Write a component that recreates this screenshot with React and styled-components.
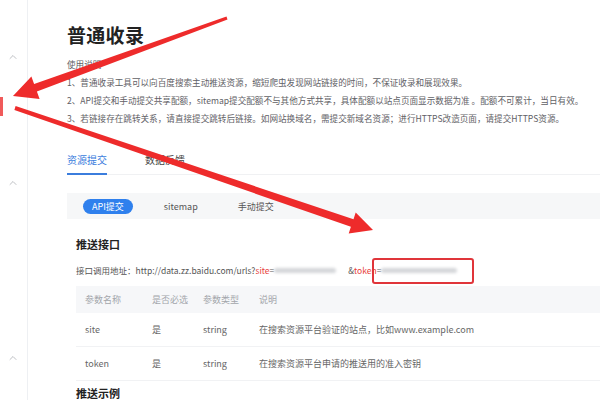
import styled, { createGlobalStyle } from 'styled-components'
import { ChevronUp } from 'lucide-react'

const GlobalStyle = createGlobalStyle`
	html, body {
		margin: 0;
		padding: 0;
		background: #fff;
	}
	body {
		font-family: "Noto Sans CJK SC", "Liberation Sans", sans-serif;
		color: #555;
	}
`

const Page = styled.div`
	position: relative;
	display: flex;
	width: 600px;
	height: 400px;
	overflow: hidden;
	background: #fff;
`

const Sidebar = styled.aside`
	flex: 0 0 27px;
	border-right: 1px solid #eef0f3;
	display: flex;
	flex-direction: column;
	align-items: center;
`

const Chevron = styled.div`
	margin-top: ${p => p.$gap}px;
	height: 12px;
	display: flex;
	color: #a8abb0;
	margin-left: -2px;
`

const Marker = styled.div`
	align-self: flex-start;
	margin-top: ${p => p.$gap}px;
	width: 3px;
	height: 19px;
	background: #f05a5a;
`

const Main = styled.main`
	flex: 1;
	padding: 23px 0 0 39px;
	min-width: 0;
`

const Title = styled.h1`
	margin: 0;
	font-size: 19px;
	line-height: 24px;
	font-weight: 700;
	color: #222;
	letter-spacing: 0.3px;
`

const Notes = styled.div`
	margin-top: 8px;
	font-size: 8.6px;
	line-height: 18px;
	color: #5f6166;
	white-space: nowrap;
`

const Tabs = styled.div`
	margin-top: 26px;
	display: flex;
	gap: 38px;
	border-bottom: 1px solid #f0f1f3;
	width: 700px;
`

const Tab = styled.div`
	font-size: 10px;
	line-height: 14px;
	padding-bottom: 6px;
	color: ${p => (p.$active ? '#3b7ddd' : '#444')};
	border-bottom: 2px solid ${p => (p.$active ? '#3b7ddd' : 'transparent')};
	margin-bottom: -1px;
`

const SubBar = styled.div`
	margin-top: 18px;
	height: 26px;
	width: 700px;
	background: #f6f7f8;
	display: flex;
	align-items: center;
	gap: 22px;
	padding-left: 16px;
	box-sizing: border-box;
`

const SubTab = styled.div`
	font-size: 9px;
	line-height: 15px;
	padding: 0 9px;
	border-radius: 8px;
	color: ${p => (p.$active ? '#fff' : '#555')};
	background: ${p => (p.$active ? '#2f80ed' : 'transparent')};
`

const Section = styled.section`
	padding-left: 9px;
`

const Heading = styled.h2`
	margin: ${p => p.$gap}px 0 0;
	font-size: 11px;
	line-height: 16px;
	font-weight: 700;
	color: #222;
`

const UrlLine = styled.div`
	position: relative;
	margin-top: 10px;
	font-size: 8.5px;
	line-height: 16px;
	color: #555;
	white-space: nowrap;
	display: flex;
	align-items: center;
`

const Red = styled.span`
	color: #e8413c;
`

const Blur = styled.span`
	display: inline-block;
	width: ${p => p.$w}px;
	height: 5px;
	margin-right: ${p => p.$mr || 0}px;
	background: #d4d6d9;
	filter: blur(1.6px);
	border-radius: 3px;
`

const Highlight = styled.div`
	position: absolute;
	left: 296px;
	top: -4px;
	width: 98px;
	height: 22px;
	border: 2px solid #e0353a;
	border-radius: 3px;
`

const Table = styled.div`
	margin-top: 8px;
	width: 700px;
	font-size: 9px;
`

const Row = styled.div`
	display: grid;
	grid-template-columns: 67px 51px 56px 1fr;
	padding-left: 9px;
	align-items: center;
	height: ${p => (p.$head ? 27 : 34)}px;
	background: ${p => (p.$head ? '#f6f7f9' : '#fff')};
	color: ${p => (p.$head ? '#a3a6ab' : '#666')};
	border-bottom: ${p => (p.$head ? 'none' : '1px solid #f1f2f4')};
	box-sizing: border-box;
`

const Overlay = styled.svg`
	position: absolute;
	left: 0;
	top: 0;
	pointer-events: none;
`

const params = [
	['site', '是', 'string', '在搜索资源平台验证的站点，比如www.example.com'],
	['token', '是', 'string', '在搜索资源平台申请的推送用的准入密钥'],
]

const App = () => (
	<Page>
		<GlobalStyle />
		<Sidebar>
			<Chevron $gap={51}><ChevronUp size={12} strokeWidth={1.5} /></Chevron>
			<Marker $gap={34} />
			<Chevron $gap={61}><ChevronUp size={12} strokeWidth={1.5} /></Chevron>
			<Chevron $gap={163}><ChevronUp size={12} strokeWidth={1.5} /></Chevron>
		</Sidebar>
		<Main>
			<Title>普通收录</Title>
			<Notes>
				<div>使用说明</div>
				<div>1、普通收录工具可以向百度搜索主动推送资源，缩短爬虫发现网站链接的时间，不保证收录和展现效果。</div>
				<div>2、API提交和手动提交共享配额，sitemap提交配额不与其他方式共享，具体配额以站点页面显示数据为准 。配额不可累计，当日有效。</div>
				<div>3、若链接存在跳转关系，请直接提交跳转后链接。如网站换域名，需提交新域名资源；进行HTTPS改造页面，请提交HTTPS资源。</div>
			</Notes>
			<Tabs>
				<Tab $active>资源提交</Tab>
				<Tab>数据反馈</Tab>
			</Tabs>
			<SubBar>
				<SubTab $active>API提交</SubTab>
				<SubTab>sitemap</SubTab>
				<SubTab>手动提交</SubTab>
			</SubBar>
			<Section>
				<Heading $gap={17}>推送接口</Heading>
				<UrlLine>
					接口调用地址：http://data.zz.baidu.com/urls?<Red>site</Red>=
					<Blur $w={62} $mr={12} />
					&amp;<Red>token</Red>=
					<Blur $w={76} />
					<Highlight />
				</UrlLine>
				<Table>
					<Row $head>
						<span>参数名称</span>
						<span>是否必选</span>
						<span>参数类型</span>
						<span>说明</span>
					</Row>
					{params.map(([name, req, type, desc]) => (
						<Row key={name}>
							<span>{name}</span>
							<span>{req}</span>
							<span>{type}</span>
							<span>{desc}</span>
						</Row>
					))}
				</Table>
				<Heading as='h3' $gap={4}>推送示例</Heading>
			</Section>
		</Main>
		<Overlay width='600' height='400' viewBox='0 0 600 400'>
			<polygon
				fill='#ee2b2b'
				points='226.5,16.6 34.1,84.0 31.4,76.5 13,96 39.6,99.1 36.9,91.6 227.5,19.4'
			/>
			<polygon
				fill='#ee2b2b'
				points='15.6,106.1 353.5,219.2 355.7,212.6 373,230 348.7,233.4 350.9,226.8 14.4,109.9'
			/>
		</Overlay>
	</Page>
)

export default App
